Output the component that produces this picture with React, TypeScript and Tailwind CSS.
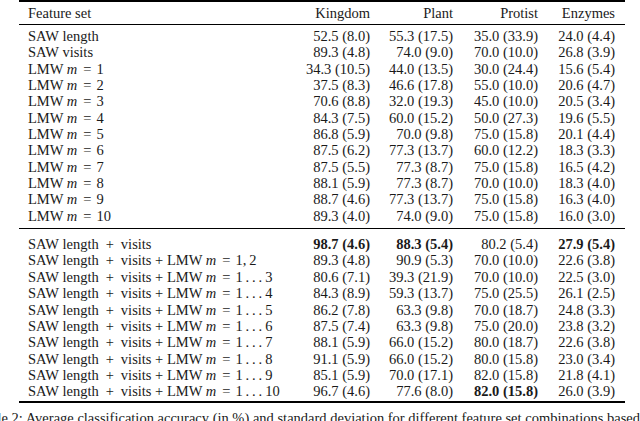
import { Fragment } from "react";

type Row = {
  label: React.ReactNode;
  vals: string[];
  bold?: boolean[];
};

// math-style "m = ..." with the wide spacing of a TeX relation
const M = ({ rest }: { rest: string }) => (
  <>
    <span className="italic pr-[1px]">m</span>
    <span className="mx-[5px]">=</span>
    <span>{rest}</span>
  </>
);

const Plus = () => <span className="mx-[7px]">+</span>;

const dots = (n: number) => `1\u2009.\u2009.\u2009.\u2009${n}`;

const first: Row[] = [
  { label: "SAW length", vals: ["52.5 (8.0)", "55.3 (17.5)", "35.0 (33.9)", "24.0 (4.4)"] },
  { label: "SAW visits", vals: ["89.3 (4.8)", "74.0 (9.0)", "70.0 (10.0)", "26.8 (3.9)"] },
  { label: <>LMW <M rest="1" /></>, vals: ["34.3 (10.5)", "44.0 (13.5)", "30.0 (24.4)", "15.6 (5.4)"] },
  { label: <>LMW <M rest="2" /></>, vals: ["37.5 (8.3)", "46.6 (17.8)", "55.0 (10.0)", "20.6 (4.7)"] },
  { label: <>LMW <M rest="3" /></>, vals: ["70.6 (8.8)", "32.0 (19.3)", "45.0 (10.0)", "20.5 (3.4)"] },
  { label: <>LMW <M rest="4" /></>, vals: ["84.3 (7.5)", "60.0 (15.2)", "50.0 (27.3)", "19.6 (5.5)"] },
  { label: <>LMW <M rest="5" /></>, vals: ["86.8 (5.9)", "70.0 (9.8)", "75.0 (15.8)", "20.1 (4.4)"] },
  { label: <>LMW <M rest="6" /></>, vals: ["87.5 (6.2)", "77.3 (13.7)", "60.0 (12.2)", "18.3 (3.3)"] },
  { label: <>LMW <M rest="7" /></>, vals: ["87.5 (5.5)", "77.3 (8.7)", "75.0 (15.8)", "16.5 (4.2)"] },
  { label: <>LMW <M rest="8" /></>, vals: ["88.1 (5.9)", "77.3 (8.7)", "70.0 (10.0)", "18.3 (4.0)"] },
  { label: <>LMW <M rest="9" /></>, vals: ["88.7 (4.6)", "77.3 (13.7)", "75.0 (15.8)", "16.3 (4.0)"] },
  { label: <>LMW <M rest="10" /></>, vals: ["89.3 (4.0)", "74.0 (9.0)", "75.0 (15.8)", "16.0 (3.0)"] },
];

const combo = (rest: string) => (
  <>
    SAW length<Plus />visits + LMW <M rest={rest} />
  </>
);

const second: Row[] = [
  {
    label: <>SAW length<Plus />visits</>,
    vals: ["98.7 (4.6)", "88.3 (5.4)", "80.2 (5.4)", "27.9 (5.4)"],
    bold: [true, true, false, true],
  },
  { label: combo("1,\u20092"), vals: ["89.3 (4.8)", "90.9 (5.3)", "70.0 (10.0)", "22.6 (3.8)"] },
  { label: combo(dots(3)), vals: ["80.6 (7.1)", "39.3 (21.9)", "70.0 (10.0)", "22.5 (3.0)"] },
  { label: combo(dots(4)), vals: ["84.3 (8.9)", "59.3 (13.7)", "75.0 (25.5)", "26.1 (2.5)"] },
  { label: combo(dots(5)), vals: ["86.2 (7.8)", "63.3 (9.8)", "70.0 (18.7)", "24.8 (3.3)"] },
  { label: combo(dots(6)), vals: ["87.5 (7.4)", "63.3 (9.8)", "75.0 (20.0)", "23.8 (3.2)"] },
  { label: combo(dots(7)), vals: ["88.1 (5.9)", "66.0 (15.2)", "80.0 (18.7)", "22.6 (3.8)"] },
  { label: combo(dots(8)), vals: ["91.1 (5.9)", "66.0 (15.2)", "80.0 (15.8)", "23.0 (3.4)"] },
  { label: combo(dots(9)), vals: ["85.1 (5.9)", "70.0 (17.1)", "82.0 (15.8)", "21.8 (4.1)"] },
  {
    label: combo(dots(10)),
    vals: ["96.7 (4.6)", "77.6 (8.0)", "82.0 (15.8)", "26.0 (3.9)"],
    bold: [false, false, true, false],
  },
];

const cols = "grid grid-cols-[277px_65px_83px_85px_77px] pl-[9px] pr-[10px]";

const Rows = ({ rows }: { rows: Row[] }) => (
  <div className={cols}>
    {rows.map((r, i) => (
      <Fragment key={i}>
        <div className="h-[16.35px] leading-[16.35px] whitespace-nowrap">{r.label}</div>
        {r.vals.map((v, j) => (
          <div
            key={j}
            className={`h-[16.35px] leading-[16.35px] text-right whitespace-nowrap ${r.bold?.[j] ? "font-bold" : ""}`}
          >
            {v}
          </div>
        ))}
      </Fragment>
    ))}
  </div>
);

const App = () => {
  return (
    <main className="w-[640px] h-[421px] overflow-hidden bg-white text-[#1a1a1a] text-[14.5px] font-['Liberation_Serif','Times_New_Roman',serif]">
      <div className="ml-[19px] w-[606px]">
        <div className="h-[2px] bg-black" />
        <div className={`${cols} h-[22px] leading-[22px]`}>
          <div>Feature set</div>
          <div className="text-right">Kingdom</div>
          <div className="text-right">Plant</div>
          <div className="text-right">Protist</div>
          <div className="text-right">Enzymes</div>
        </div>
        <div className="h-px bg-black" />
        <div className="pt-[3px] pb-[4px]">
          <Rows rows={first} />
        </div>
        <div className="h-px bg-black" />
        <div className="pt-[7px] pb-[1.5px]">
          <Rows rows={second} />
        </div>
        <div className="h-[2px] bg-black" />
      </div>
      <p className="mt-[7px] -ml-[24px] whitespace-nowrap leading-[16px]">
        Table 2: Average classification accuracy (in %) and standard deviation for different feature set combinations based on the SAW and LMW features.
      </p>
    </main>
  );
};

export default App;
